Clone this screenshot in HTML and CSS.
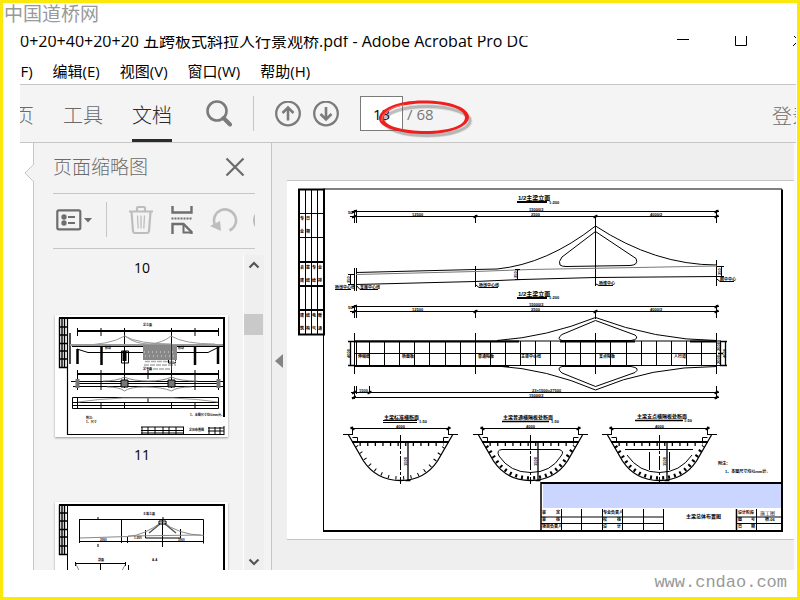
FILE: index.html
```html
<!DOCTYPE html>
<html lang="zh-CN">
<head>
<meta charset="utf-8">
<title>Adobe Acrobat Pro DC</title>
<link rel="stylesheet" href="styles.css">
</head>
<body>
<div class="frame">
  <div class="mark mark-top">中国道桥网</div>
  <div class="window">
    <header class="titlebar">
      <h1 class="title">0+20+40+20+20 五跨板式斜拉人行景观桥.pdf - Adobe Acrobat Pro DC</h1>
      <div class="controls">
        <button class="icon-btn" aria-label="最小化"><svg width="12" height="12" viewBox="0 0 12 12"><path d="M0 4.500H12" stroke="#000"/></svg></button>
        <button class="icon-btn" aria-label="最大化"><svg width="12" height="12" viewBox="0 0 12 12"><path d="M.5-.500h11v11H.5z" stroke="#000" fill="none"/></svg></button>
        <button class="icon-btn" aria-label="关闭"><svg width="12" height="12" viewBox="0 0 12 12"><path d="M0 11 11 0M0 0l11 11" stroke="#000"/></svg></button>
      </div>
    </header>
    <nav class="menubar">
      <button>(F)</button><button>编辑(E)</button><button>视图(V)</button><button>窗口(W)</button><button>帮助(H)</button>
    </nav>
    <div class="toolbar">
      <nav class="tabs">
        <button class="tab">主页</button><button class="tab">工具</button><button class="tab active">文档</button>
      </nav>
      <button class="icon-btn search" aria-label="搜索"><svg width="26" height="28" viewBox="0 0 26 28" fill="none" stroke="#7b7b7b"><circle cx="11" cy="11" r="9.500" stroke-width="2.600"/><path d="M17.500 18 24 24.500" stroke-width="4" stroke-linecap="round"/></svg></button>
      <span class="divider"></span>
      <button class="icon-btn" aria-label="上一页"><svg width="26" height="26" viewBox="0 0 26 26" fill="none" stroke="#7b7b7b" stroke-width="2.300"><circle cx="13" cy="12.500" r="11.800"/><path d="M13 19.500V8M7.500 12 13 6.500l5.500 5.500" stroke-width="2.600"/></svg></button>
      <button class="icon-btn next" aria-label="下一页"><svg width="26" height="26" viewBox="0 0 26 26" fill="none" stroke="#7b7b7b" stroke-width="2.300"><circle cx="13" cy="12.500" r="11.800"/><path d="M13 6v12M7.500 13 13 18.500l5.500-5.500" stroke-width="2.600"/></svg></button>
      <div class="pager">
        <input id="page" type="text" value="13" aria-label="页码">
        <label for="page">/ 68</label>
        <svg class="ring" width="100" height="44" viewBox="0 0 100 44" fill="none">
          <ellipse cx="50" cy="24" rx="43" ry="14.500" stroke="#777" stroke-opacity=".15" stroke-width="5" transform="translate(2 2)"/>
          <ellipse cx="50" cy="24" rx="43" ry="14.500" stroke="#555" stroke-opacity=".3" stroke-width="3" transform="translate(2 2)"/>
          <path fill="#ee1f1c" fill-rule="evenodd" d="M48 5.500C76 5.500 94 13 94 22 94 32 75 39 51 39 26 39 4 33 4 23.500 4 14 22 5.500 48 5.500ZM49 8.500C26 8.500 9 15 9 23.500 9 31 28 36 51 36 73 36 90 31 90 22.500 90 14 72 8.500 49 8.500Z"/>
          <path d="M7 26c-1-7 8-14 22-16" stroke="#ff8078" stroke-width="1"/>
        </svg>
      </div>
      <button class="signin">登录</button>
    </div>
    <div class="workspace">
      <div class="rail"><svg class="notch" width="11" height="20" viewBox="0 0 11 20"><path d="M10 1 1 10l9 9z" fill="#f3f3f3"/><path d="M10 1 1 10l9 9" fill="none" stroke="#c6c6c6"/></svg></div>
      <aside class="panel">
        <div class="panel-head">
          <h2>页面缩略图</h2>
          <button class="icon-btn" aria-label="关闭面板"><svg width="20" height="20" viewBox="0 0 20 20"><path d="M1.500 1.500l17 17M18.500 1.500l-17 17" stroke="#6b6b6b" stroke-width="2.200"/></svg></button>
        </div>
        <div class="panel-tools">
          <button class="icon-btn" aria-label="选项"><svg width="36" height="24" viewBox="0 0 36 24"><rect x="1.300" y="2.300" width="23" height="19" rx="1.500" fill="none" stroke="#6e6e6e" stroke-width="2.200"/><circle cx="8" cy="9" r="2.700" fill="#6e6e6e"/><circle cx="8" cy="15" r="2.700" fill="#6e6e6e"/><path d="M12 9h7M12 15h7" stroke="#6e6e6e" stroke-width="2.200"/><path d="M28 10h8l-4 4.500z" fill="#6e6e6e"/></svg></button>
          <span class="divider"></span>
          <button class="icon-btn trash" aria-label="删除"><svg width="26" height="30" viewBox="0 0 26 30" fill="none" stroke="#bdbdbd" stroke-width="2.200"><path d="M1 6.500h24M9 6V3q0-1 1-1h6q1 0 1 1v3M3.500 7l1.500 19q.2 2 2 2h12q1.800 0 2-2L22.500 7"/><path d="M9.500 10.500l.7 13M13 10.500v13M16.500 10.500l-.7 13" stroke-width="1.300"/></svg></button>
          <button class="icon-btn split" aria-label="插入页面"><svg width="24" height="28" viewBox="0 0 24 28" fill="none" stroke="#6e6e6e" stroke-width="2.400"><path d="M2.500 0v6.500h19V0"/><path d="M1.500 12.500h21" stroke-width="2" stroke-dasharray="2 1"/><path d="M2.500 28V18h11l8 8v2"/><path d="M13.500 18v8.500h8" stroke-width="2"/></svg></button>
          <button class="icon-btn rotate" aria-label="逆时针旋转"><svg width="28" height="26" viewBox="0 0 28 26" fill="none"><path d="M5 18A11 11 0 1 1 19.500 23.500" stroke="#bdbdbd" stroke-width="2.600"/><path d="M0 19l10-5 1 10z" fill="#bdbdbd"/></svg></button>
          <button class="icon-btn more" aria-label="顺时针旋转"><svg width="26" height="26" viewBox="0 0 26 26" fill="none"><path d="M8 23.500A11 11 0 1 1 23 16" stroke="#bdbdbd" stroke-width="2.600"/></svg></button>
        </div>
        <div class="thumbs">
          <div class="thumb-list">
            <p>10</p>
            <svg class="thumb" viewBox="55 315 173 122">
              <g fill="none" stroke="#000">
                <path d="M67.500 317.500V434.500H224" stroke-width="1.200"/><path d="M59 318H224V417" stroke-width="2"/>
                <path d="M59.500 318V367.500H67M62 318V367M64.500 318V367M59 327H67M59 335H67M59 343.500H67M59 351H67M59 359H67M70 333V364" stroke-width="1.400"/>
                <path d="M77 331H219M77 374H219" stroke-width="2"/>
                <path d="M77.500 328v8M101 328v8M124.500 328v60M171.500 328v60M195 328v8M218.500 328v8M77.500 370v20M101 370v20M195 370v20M218.500 370v20M148 370v9"/>
                <path d="M72 346.500H223M77 349l11 3.500H208l13-6.500"/>
                <path d="M70 345h153" stroke="#999" stroke-width="2"/><path d="M80 345q30 0 44.500-9 14 8 47 8" stroke="#999"/><path d="M125 336q10 8 24 8 14-1 22-8 13 8 44 8" stroke="#999"/>
                <path d="M77.500 349v15M101.500 347v18M195 347v18M218 347v17" stroke-width="2.500"/>
                <path d="M121.500 351h7v12h-7zM168.500 351h7v12h-7z"/>
                <path d="M122.500 356h4" stroke-width="10"/>
                <path d="M71 381.500H223M77 383.500H218M73 386.500H223"/>
                <path d="M103 381q14 0 21.500-4 8 4 24 4 15 0 23-4 8 4 26 4M107 387q13 0 17.500 4 5-4 20-4 18 0 27 4 5-4 20-4" stroke="#888"/>
                <path d="M121 380h7v7h-7zM168 380h7v7h-7z" fill="#777"/><path d="M77.500 379v9M218.500 379v9" stroke="#777" stroke-width="4"/>
                <path d="M72.500 397.500h146v11h-146zM72 402.500h147M72 405.500h147M77.500 398v10M101 403v5M124.500 403v5M171.500 403v5M195 403v5M148 398v4"/>
                <path d="M78 402q20-3 45-4h50q25 1 45 4" stroke="#999"/>
                <path d="M141 427h43M141 430.500h43M141 433h43M142 427v8M148 427v8M155 427v8M163 427v8M169 427v8M176 427v8M183.500 427v8M208 428h16M208 431h16M209 427v7M215 427v7M220 427v7M224 426v9"/>
              </g>
              <rect x="143" y="345" width="34" height="15" fill="#888"/><path d="M145 361.500h31M144 365h32M147 369h25" stroke="#aaa" stroke-width="1.500" stroke-dasharray="5 1"/><path d="M144 352h31M145 356h31" stroke="#ddd" stroke-dasharray="1 3"/><path d="M171.500 344v26" stroke="#333"/>
              <g class="tiny"><text x="143" y="326">总立面</text><text x="143" y="370">总平面</text><text x="86" y="419">附注:</text><text x="86" y="423">1、尺寸</text><text x="190" y="416">1、本图尺寸均以mm计。</text><text x="189" y="431">总体布置图</text><text x="105" y="349">桥墩</text><text x="178" y="349">桥墩</text></g>
            </svg>
            <p>11</p>
            <svg class="thumb" viewBox="55 502 173 122">
              <g fill="none" stroke="#000">
                <path d="M67.500 505V621.500H224"/><path d="M59 505H224V622" stroke-width="2"/>
                <path d="M59.500 505V554.500H67M62 505V554M64.500 505V554M59 513H67M59 521H67M59 529.500H67M59 537H67M59 546H67" stroke-width="1.400"/>
                <path d="M79.500 519.500h124v24M79.500 519v24M121.500 519v24M79 541.500h125M162.500 519v28M145.500 530v8h35v-8M98 517v3M163 517v3M98 544v3M127.500 537v6M180.500 529v8"/>
                <path d="M80 538l48-1.500q16-1 34.500-15 15 13 41 14M128 536l73-1" stroke="#888"/><path d="M160 524l-11 9M165 524l11 9" stroke="#555" stroke-width="1.400"/><path d="M159 521h7v3h-7z"/>
                <path d="M75 563.500h51M75.500 562v4M125.500 562v4M100.500 564v8M128.500 565v8"/><path d="M76 564l12 26q12 10 24 0l13-25" stroke="#888"/>
              </g>
              <g class="tiny"><text x="143" y="515">主塔立面</text><text x="98" y="561">剖面</text><text x="152" y="561">A-A</text><text x="134" y="539">1:200</text><text x="100" y="541">2000</text><text x="178" y="541">3000</text></g>
            </svg>
          </div>
          <div class="scroll">
            <button class="icon-btn" aria-label="向上"><svg width="12" height="10" viewBox="0 0 12 10"><path d="M1.500 7.500 6 3l4.500 4.500" fill="none" stroke="#555" stroke-width="2.200"/></svg></button>
            <div class="scroll-track"><div class="scroll-thumb"></div></div>
            <button class="icon-btn" aria-label="向下"><svg width="12" height="10" viewBox="0 0 12 10"><path d="M1.500 2.500 6 7l4.500-4.500" fill="none" stroke="#555" stroke-width="2.200"/></svg></button>
          </div>
        </div>
      </aside>
      <button class="icon-btn collapse" aria-label="折叠面板"><svg width="8" height="14" viewBox="0 0 8 14"><path d="M8 0v14L0 7z" fill="#848484"/></svg></button>
      <main class="document">
        <svg class="sheet" viewBox="287 181 507 358" role="img" aria-label="主梁总体布置图">
          <defs>
            <g id="section" fill="none" stroke="#000">
              <path d="M-48 428.500H48M-48 426.500v8M48 426.500v8M-57.500 434.500h10M47.500 434.500h10"/>
              <path d="M-50 427.500l4 2M46 429.500l4-2" stroke-width="2"/>
              <path d="M-48 437.500h5v4M48 437.500h-5v4"/>
              <path d="M-48.500 442h97" stroke-width="2"/>
              <path d="M-52 435-37 461Q-24 480.500 0 480.500T37 461L52 435" stroke-width="1.300"/>
              <path d="M0 435V484" stroke-dasharray="14 2 3 2"/>
              <path d="M7.500 442v39M5 442h5M5 480.500h5" stroke-width="1.300"/>
            </g>
            <g id="ribs" fill="none" stroke="#000">
              <path d="M-41 444.500H43" stroke-width="3" stroke-dasharray="1.300 6.300"/>
            </g>
            <path id="rim" d="M-44 446-34.500 460Q-22 478 0 478T34.500 460L44 446" fill="none" stroke="#000" stroke-width="3.500"/>
          </defs>
          <g fill="none" stroke="#000">
            <path d="M323.500 531V189H782"/><path d="M782 189.500V531H323" stroke-width="2"/>
            <path d="M299 189.500h25v145h-25z" stroke-width="2"/>
            <path d="M305.500 189v145M311.500 189v145M317.500 189v145M298 213.500h26M298 237.500h26"/><path d="M298 262h26M298 286h26M298 310h26" stroke-width="2"/>
            <path d="M517 202h30M517 298h30" stroke-width="2"/>
          </g>
          <g id="dims" fill="none" stroke="#000">
            <path d="M352 211.500H719M350 216.500H719M354.500 210v13M356.500 210v13M475.500 215v8M716.500 210v13"/>
            <path d="M352 212.500l5-2M352 217.500l5-2M473.500 217.500l4-2M593.500 217.500l4-2M714.500 212.500l4-2M714.500 217.500l4-2" stroke-width="2"/>
          </g>
          <use href="#dims" y="95"/>
          <g fill="none" stroke="#000">
            <path d="M595.500 216v70M595.500 311v8M354.500 268v23M356.500 268v23M475.500 266v21M716.500 260v26"/>
            <path d="M356 272.500 475 269.500 497 269Q547 264 595.500 226 655 265 717 265"/>
            <path d="M356 274.500 475 271.500 530 269.500 717 266" stroke="#777"/>
            <path d="M356 284.500 475 281.500 522 279.500 595 277.500 717 276.500"/>
            <path d="M595.500 231.500 562 257Q558 262 560 265 562 266.500 566 266.500L630 265.500Q639 265 636 258.500L595.500 231.500"/>
            <path d="M350.500 274v10M348 274.500h7M348 284.500h7M517.500 269v10M515 269.500h5M515 279.500h5M721.500 266v10M717 266.500h7M717 276.500h7"/>
            <path d="M335 289.500h16M356 285l4 4.500h18M476 285l3 2.500h19M596 284l3 1.500h14M717 279l3 2.500h14"/>
            <path d="M354 341h367M354 365.500h367M354 353.500h363"/><path d="M354 341.500h165M560 341.500h75M690 341.500h27M354 366h155" stroke-width="2"/>
            <path d="M354.500 333v9M475.500 333v9M595.500 333v9M716.500 333v9M354.500 365v9M475.500 365v9M595.500 365v9M716.500 365v9M354.500 341v25M356.500 341v25"/>
            <path d="M369.500 341v25M384.500 341v25M399.500 341v25M414.500 341v25M429.500 341v25M445.500 341v25M460.500 341v25M475.500 341v25M490.500 341v25M505.500 341v25M520.500 341v25M535.500 341v25M550.500 341v25M565.500 341v25M580.500 341v25M595.500 341v25M610.500 341v25M626.500 341v25M641.500 341v25M656.500 341v25M671.500 341v25M686.500 341v25M701.500 341v25M716.500 341v25"/>
            <path d="M497 340.500Q547 337 595.500 317.500 655 340 717 340.500M497 366Q547 369 595.500 390 650 366.500 717 366.500"/>
            <path d="M595.500 320.500 562 334.500Q556 339 562 340.500H631Q640 339 635 335L595.500 320.500M595.500 386.500 562 373Q556 368 562 366.500H631Q641 368 635 372.500Z"/>
            <path d="M350.500 341v25M348 341.500h6M348 365.500h6M720.500 341v25M725.500 341v25M718 353.500h5M720 341.500h7M720 365.500h7" stroke-width="1.300"/>
            <path d="M351 392.500H719M352 397.500H719M354.500 386v13M356.500 386v8M369.500 386v7M716.500 386v13"/>
            <path d="M352 393.500l4-2M352 398.500l4-2M367.500 393.500l4-2M714.500 393.500l4-2M714.500 398.500l4-2" stroke-width="2"/>
          </g>
          <use href="#section" x="400.500"/><use href="#ribs" x="400.500"/><use href="#rim" x="400.500" stroke-dasharray="1 6.500"/>
          <use href="#section" x="530.500"/><use href="#ribs" x="530.500"/><use href="#rim" x="530.500" stroke-dasharray="2 4"/>
          <use href="#section" x="659.500"/><use href="#ribs" x="659.500"/><use href="#rim" x="659.500" stroke-dasharray="2 4"/>
          <g fill="none" stroke="#000">
            <path d="M383 420.500h34M383 422.500h34"/><path d="M502 421.500h47M635 420.500h48" stroke-width="1.500"/>
            <path d="M502 449.500H559Q565 451 561 456 551 472.500 530.500 472.500T499 456Q496 450 502 449.500Z"/>
            <path d="M625 449.500h68M627 455q12 17.500 32.500 17.500T692 455M649.500 452v18M669.500 452v18"/>
            <path d="M541 483h241" stroke-width="2"/><path d="M541 482v49M736.500 509v22" stroke-width="1.500"/>
            <path d="M541 517h123M541 523.500h123M736 517h46M736 523.500h46M561.500 509v22M581.500 509v22M602.500 509v22M622.500 509v22M643.500 509v22M663.500 509v22M756.500 509v22"/>
          </g>
          <rect x="543" y="484" width="238" height="24" fill="#cad6ff"/>
          <g class="sheet-title"><text x="518" y="200">1/2主梁立面</text><text x="518" y="296">1/2主梁立面</text></g>
          <g class="caption"><text x="384" y="419">主梁标准横断面</text><text x="503" y="419">主梁普通横隔板处断面</text><text x="637" y="418">主梁支点横隔板处断面</text><text x="686" y="518">主梁总体布置图</text></g>
          <g class="note">
            <text x="549" y="204">1:200</text><text x="549" y="299">1:200</text><text x="419" y="423">1:50</text><text x="551" y="423">1:50</text><text x="684" y="422">1:50</text>
            <text x="529" y="211">15000/2</text><text x="529" y="306">15000/2</text><text x="529" y="397">15000/2</text><text x="532" y="392">23×1500=27500</text>
            <text x="412" y="216">12500</text><text x="412" y="311">12500</text><text x="531" y="216">2500</text><text x="531" y="311">2500</text><text x="650" y="216">4000/2</text><text x="650" y="311">4000/2</text>
            <text x="348" y="214">50</text><text x="348" y="309">50</text><text x="359" y="392">1500</text>
            <text x="396" y="428">4000</text><text x="526" y="428">4000</text><text x="655" y="428">4000</text>
            <text x="335" y="289">桥墩中心线</text><text x="360" y="289">支座中心线</text><text x="479" y="287">桥墩中心线</text><text x="599" y="285">桥塔中心</text><text x="720" y="281">跨中中心</text>
            <text x="358" y="358">伸缩缝</text><text x="402" y="358">桥面板</text><text x="478" y="358">普通隔板</text><text x="521" y="358">主梁中心线</text><text x="599" y="358">支点隔板</text><text x="674" y="358">人行道</text>
            <text transform="translate(350 283) rotate(-90)">350</text><text transform="translate(516.500 278) rotate(-90)">350</text><text transform="translate(721 275) rotate(-90)">350</text>
            <text transform="translate(350 358) rotate(-90)">4000</text><text transform="translate(720 351) rotate(-90)">2000</text><text transform="translate(720 364) rotate(-90)">2000</text><text transform="translate(726 358) rotate(-90)">4000</text>
            <text transform="translate(407 466) rotate(-90)">1500</text><text transform="translate(537 466) rotate(-90)">1500</text><text transform="translate(666 466) rotate(-90)">1500</text>
            <text x="718" y="465">附注：</text><text x="725" y="473">1、本图尺寸均以mm计。</text>
            <text x="300" y="220">专</text><text x="306" y="220">日</text><text x="300" y="233">业</text><text x="306" y="233">期</text>
            <text x="300" y="269">会</text><text x="306" y="269">签</text><text x="312" y="269">专</text><text x="318" y="269">业</text><text x="300" y="282">建</text><text x="306" y="282">结</text><text x="312" y="282">给</text><text x="318" y="282">排</text>
            <text x="300" y="317">建</text><text x="306" y="317">结</text><text x="312" y="317">电</text><text x="318" y="317">暖</text><text x="300" y="330">筑</text><text x="306" y="330">构</text><text x="312" y="330">气</text><text x="318" y="330">通</text>
            <text x="542" y="514">审</text><text x="556" y="514">定</text><text x="542" y="521">审</text><text x="556" y="521">核</text><text x="542" y="528">项目负责人</text>
            <text x="603" y="514">专业负责人</text><text x="603" y="521">校</text><text x="617" y="521">核</text><text x="603" y="528">设</text><text x="617" y="528">计</text>
            <text x="738" y="514">设计阶段</text><text x="738" y="521">图</text><text x="751" y="521">号</text><text x="738" y="528">日</text><text x="751" y="528">期</text><text x="765" y="521">桥-06</text>
          </g>
          <text class="stage" x="760" y="515">施工图</text>
        </svg>
      </main>
    </div>
  </div>
  <div class="mark mark-bottom">www.cndao.com</div>
</div>
</body>
</html>
```
FILE: styles.css
```css
* { box-sizing: border-box; }
body {
  margin: 0;
  font-family: "Open Sans", "Noto Sans CJK SC", sans-serif;
  font-size: 15px;
  color: #000;
}
h1, h2, p { margin: 0; font-weight: 400; }
button { padding: 0; border: 0; background: none; font: inherit; color: inherit; white-space: nowrap; }
svg { display: block; }
.icon-btn { flex: none; display: block; }

.frame {
  position: relative;
  height: 100vh;
  border: 3px solid #fde80c;
  padding: 33px 1px 27px 17px;
  background: #fff;
  overflow: hidden;
}
.mark { position: absolute; color: #999; line-height: 1; }
.mark-top { left: 1px; top: 0; font-family: "Noto Sans CJK SC", sans-serif; font-size: 19px; }
.mark-bottom { right: 10px; bottom: 6px; font-family: "Liberation Mono", monospace; font-size: 17px; }

.window { height: 100%; display: flex; flex-direction: column; overflow: hidden; }
.titlebar { flex: none; display: flex; justify-content: space-between; height: 22px; overflow: hidden; }
.title { margin-top: -7px; font-size: 16px; line-height: 24px; white-space: nowrap; }
.controls { display: flex; gap: 46px; align-items: flex-start; margin-right: -9px; margin-top: -1px; }
.menubar { flex: none; display: flex; gap: 20px; height: 26px; align-items: center; margin-left: -4px; font-size: 15px; line-height: 20px; }

.toolbar {
  flex: none;
  display: flex;
  align-items: center;
  height: 59px;
  background: #f4f4f4;
  border-top: 1px solid #c6c6c6;
  border-bottom: 1px solid #c6c6c6;
}
.tabs { display: flex; gap: 29px; height: 57px; margin-left: -26px; }
.tab { border-bottom: 3px solid transparent; padding-top: 4px; font-size: 20px; font-weight: 300; color: #6b6b6b; }
.tab.active { border-color: #2b2b2b; color: #2b2b2b; }
.search { margin-left: 34px; }
.divider { flex: none; width: 1px; height: 35px; background: #c6c6c6; }
.toolbar .divider { margin: 0 21px; }
.next { margin-left: 12px; }
.pager { position: relative; display: flex; align-items: center; gap: 4px; margin-left: 21px; color: #777; }
.pager input { width: 43px; height: 35px; border: 1px solid #7b7b7b; background: #fff; text-align: center; padding: 0; font: inherit; color: #000; }
.ring { position: absolute; left: 15px; top: -1px; }
.signin { margin-left: auto; margin-right: -16px; padding-top: 4px; font-size: 20px; font-weight: 300; color: #6b6b6b; }

.workspace { flex: 1; min-height: 0; display: grid; grid-template-columns: 13px 239px 15px 1fr; grid-template-rows: minmax(0, 1fr); }
.rail { position: relative; background: #fff; }
.notch { position: absolute; left: 4px; top: 20px; z-index: 1; }
.panel { display: flex; flex-direction: column; background: #f3f3f3; border-left: 1px solid #c6c6c6; border-right: 1px solid #c6c6c6; }
.panel-head, .panel-tools { flex: none; display: flex; align-items: center; margin: 0 16px 0 19px; border-bottom: 1px solid #c6c6c6; }
.panel-head { justify-content: space-between; height: 51px; padding: 0 10px 2px 0; }
.panel-head h2 { font-size: 19px; font-weight: 300; line-height: 26px; color: #6b6b6b; }
.panel-tools { height: 55px; padding: 0 0 3px 3px; overflow: hidden; }
.panel-tools .divider { margin-left: 14px; }
.trash { margin-left: 21px; }
.split { margin-left: 16px; }
.rotate { margin-left: 16px; }
.more { margin-left: 15px; }

.thumbs { flex: 1; min-height: 0; display: flex; margin: 6px 7px 0; }
.thumb-list { flex: 1; display: flex; flex-direction: column; overflow: hidden; border-right: 1px solid #fff; }
.thumb-list p { flex: none; height: 60px; padding-top: 3px; line-height: 20px; font-size: 14px; text-align: center; }
.thumb-list p + svg + p { height: 65px; padding-top: 8px; }
.thumb { flex: none; width: 173px; margin-left: 14px; background: #fff; box-shadow: 0 1px 2px #999; }
.scroll { flex: none; display: flex; flex-direction: column; width: 20px; align-items: center; padding: 5px 0 3px; background: #efefef; }
.scroll-track { flex: 1; width: 100%; }
.scroll-thumb { width: 19px; height: 21px; margin-top: 44px; background: #c9c9c9; }
.collapse { background: #efefef; padding-left: 3px; }
.collapse svg { margin-top: 8px; }
.document { min-width: 0; padding-top: 37px; background: #efefef; border-right: 2px solid #fafafa; overflow: hidden; }
.sheet { width: 100%; background: #fff; border-top: 1px solid #c6c6c6; border-bottom: 1px solid #c6c6c6; }

.sheet text, .thumb text { font-family: "Liberation Sans", "Noto Sans CJK SC", sans-serif; font-weight: 700; }
.tiny text { font-size: 3px; }
.sheet-title text { font-size: 6px; }
.caption text { font-size: 5px; }
.note text { font-size: 4px; }
.sheet .stage { font-size: 5px; font-weight: 400; fill: #223; }
```
